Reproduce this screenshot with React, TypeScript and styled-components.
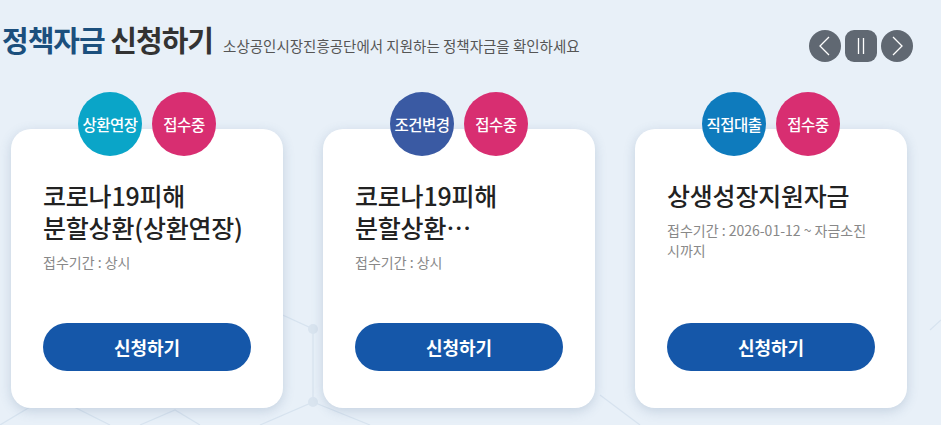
import React from 'react';
import styled, { createGlobalStyle } from 'styled-components';

const GlobalStyle = createGlobalStyle`
  html, body {
    margin: 0;
    padding: 0;
    background: #e8f0f8;
  }
  body {
    font-family: 'Noto Sans CJK KR', 'Noto Sans', sans-serif;
    color: #222;
  }
`;

const Section = styled.section`
  position: relative;
  width: 941px;
  height: 425px;
  overflow: hidden;
  background: #e8f0f8;
`;

const Backdrop = styled.svg`
  position: absolute;
  left: 0;
  top: 0;
  pointer-events: none;
`;

const Inner = styled.div`
  position: relative;
  display: flex;
  flex-direction: column;
`;

const Header = styled.header`
  display: flex;
  justify-content: space-between;
  align-items: flex-start;
  height: 60px;
  box-sizing: border-box;
  padding: 20px 28px 0 2px;
`;

const TitleWrap = styled.div`
  display: flex;
  align-items: baseline;
  gap: 10px;
`;

const Title = styled.h2`
  margin: 0;
  font-size: 29px;
  line-height: 38px;
  font-weight: 700;
  letter-spacing: -1px;
  color: #333;

  em {
    font-style: normal;
    color: #1b4f7d;
  }
`;

const Lead = styled.p`
  margin: 0;
  font-size: 14.5px;
  letter-spacing: 0;
  color: #555;
`;

const Nav = styled.div`
  display: flex;
  gap: 4px;
  margin-top: 10px;
`;

const NavButton = styled.button<{ $square?: boolean }>`
  width: 32px;
  height: 32px;
  padding: 0;
  border: 0;
  border-radius: ${(p) => (p.$square ? '9px' : '50%')};
  background: #606872;
  display: flex;
  align-items: center;
  justify-content: center;
  cursor: pointer;
`;

const CardRow = styled.div`
  display: flex;
  gap: 40px;
  padding: 69px 0 0 11px;
`;

const Card = styled.article`
  position: relative;
  box-sizing: border-box;
  width: 272px;
  height: 279px;
  padding: 50px 32px 37px;
  background: #fff;
  border-radius: 20px;
  box-shadow: 0 3px 12px rgba(70, 100, 140, 0.22);
  display: flex;
  flex-direction: column;
`;

const Badges = styled.div`
  position: absolute;
  top: -37px;
  left: 0;
  right: 0;
  display: flex;
  justify-content: center;
  gap: 10px;
`;

const Badge = styled.span<{ $color: string }>`
  width: 64px;
  height: 64px;
  border-radius: 50%;
  background: ${(p) => p.$color};
  color: #fff;
  font-size: 15.5px;
  font-weight: 500;
  letter-spacing: -0.5px;
  display: flex;
  align-items: center;
  justify-content: center;
`;

const CardTitle = styled.h3`
  margin: 0;
  font-size: 25px;
  line-height: 32px;
  font-weight: 500;
  letter-spacing: -0.2px;
  color: #222;
  word-break: keep-all;
  display: -webkit-box;
  -webkit-line-clamp: 2;
  -webkit-box-orient: vertical;
  overflow: hidden;
`;

const Period = styled.p`
  margin: 9px 0 0;
  font-size: 14px;
  line-height: 20px;
  letter-spacing: 0;
  color: #888;
`;

const ApplyButton = styled.button`
  margin-top: auto;
  width: 208px;
  height: 48px;
  border: 0;
  border-radius: 24px;
  background: #1557a9;
  color: #fff;
  font-family: inherit;
  font-size: 18px;
  font-weight: 700;
  letter-spacing: 0;
  cursor: pointer;
`;

type Fund = {
  type: string;
  typeColor: string;
  title: string;
  period: string;
};

const funds: Fund[] = [
  {
    type: '상환연장',
    typeColor: '#0aa5c8',
    title: '코로나19피해 분할상환(상환연장)',
    period: '접수기간 : 상시',
  },
  {
    type: '조건변경',
    typeColor: '#3a5aa3',
    title: '코로나19피해 분할상환 (조건변경지원)',
    period: '접수기간 : 상시',
  },
  {
    type: '직접대출',
    typeColor: '#0e7bbd',
    title: '상생성장지원자금',
    period: '접수기간 : 2026-01-12 ~ 자금소진시까지',
  },
];

const Chevron = ({ dir }: { dir: 'left' | 'right' }) => (
  <svg width="14" height="20" viewBox="0 0 14 20" fill="none">
    <path
      d={dir === 'left' ? 'M11 1 L2 10 L11 19' : 'M3 1 L12 10 L3 19'}
      stroke="#fff"
      strokeWidth="1.3"
    />
  </svg>
);

const PauseIcon = () => (
  <svg width="10" height="18" viewBox="0 0 10 18" fill="none">
    <path d="M2.5 1 V17 M7.5 1 V17" stroke="#fff" strokeWidth="1.3" />
  </svg>
);

const App = () => {
  return (
    <Section>
      <GlobalStyle />
      <Backdrop width="941" height="425" viewBox="0 0 941 425">
        <g stroke="#d7e3ef" strokeWidth="1.2" fill="none">
          <path d="M250 300 L313 329 L313 402 L260 425" />
          <path d="M313 402 L370 425" />
          <path d="M0 425 L50 395 L110 425" />
          <path d="M140 425 L175 410 L200 425" />
          <path d="M600 395 L640 425" />
          <path d="M930 330 L941 320" />
        </g>
        <g fill="#d9e4ef">
          <circle cx="313" cy="329" r="5" />
          <circle cx="313" cy="402" r="5" />
        </g>
      </Backdrop>
      <Inner>
        <Header>
          <TitleWrap>
            <Title>
              <em>정책자금</em> 신청하기
            </Title>
            <Lead>소상공인시장진흥공단에서 지원하는 정책자금을 확인하세요</Lead>
          </TitleWrap>
          <Nav>
            <NavButton aria-label="이전">
              <Chevron dir="left" />
            </NavButton>
            <NavButton $square aria-label="정지">
              <PauseIcon />
            </NavButton>
            <NavButton aria-label="다음">
              <Chevron dir="right" />
            </NavButton>
          </Nav>
        </Header>
        <CardRow>
          {funds.map((fund) => (
            <Card key={fund.title}>
              <Badges>
                <Badge $color={fund.typeColor}>{fund.type}</Badge>
                <Badge $color="#d82e71">접수중</Badge>
              </Badges>
              <CardTitle>{fund.title}</CardTitle>
              <Period>{fund.period}</Period>
              <ApplyButton>신청하기</ApplyButton>
            </Card>
          ))}
        </CardRow>
      </Inner>
    </Section>
  );
};

export default App;
